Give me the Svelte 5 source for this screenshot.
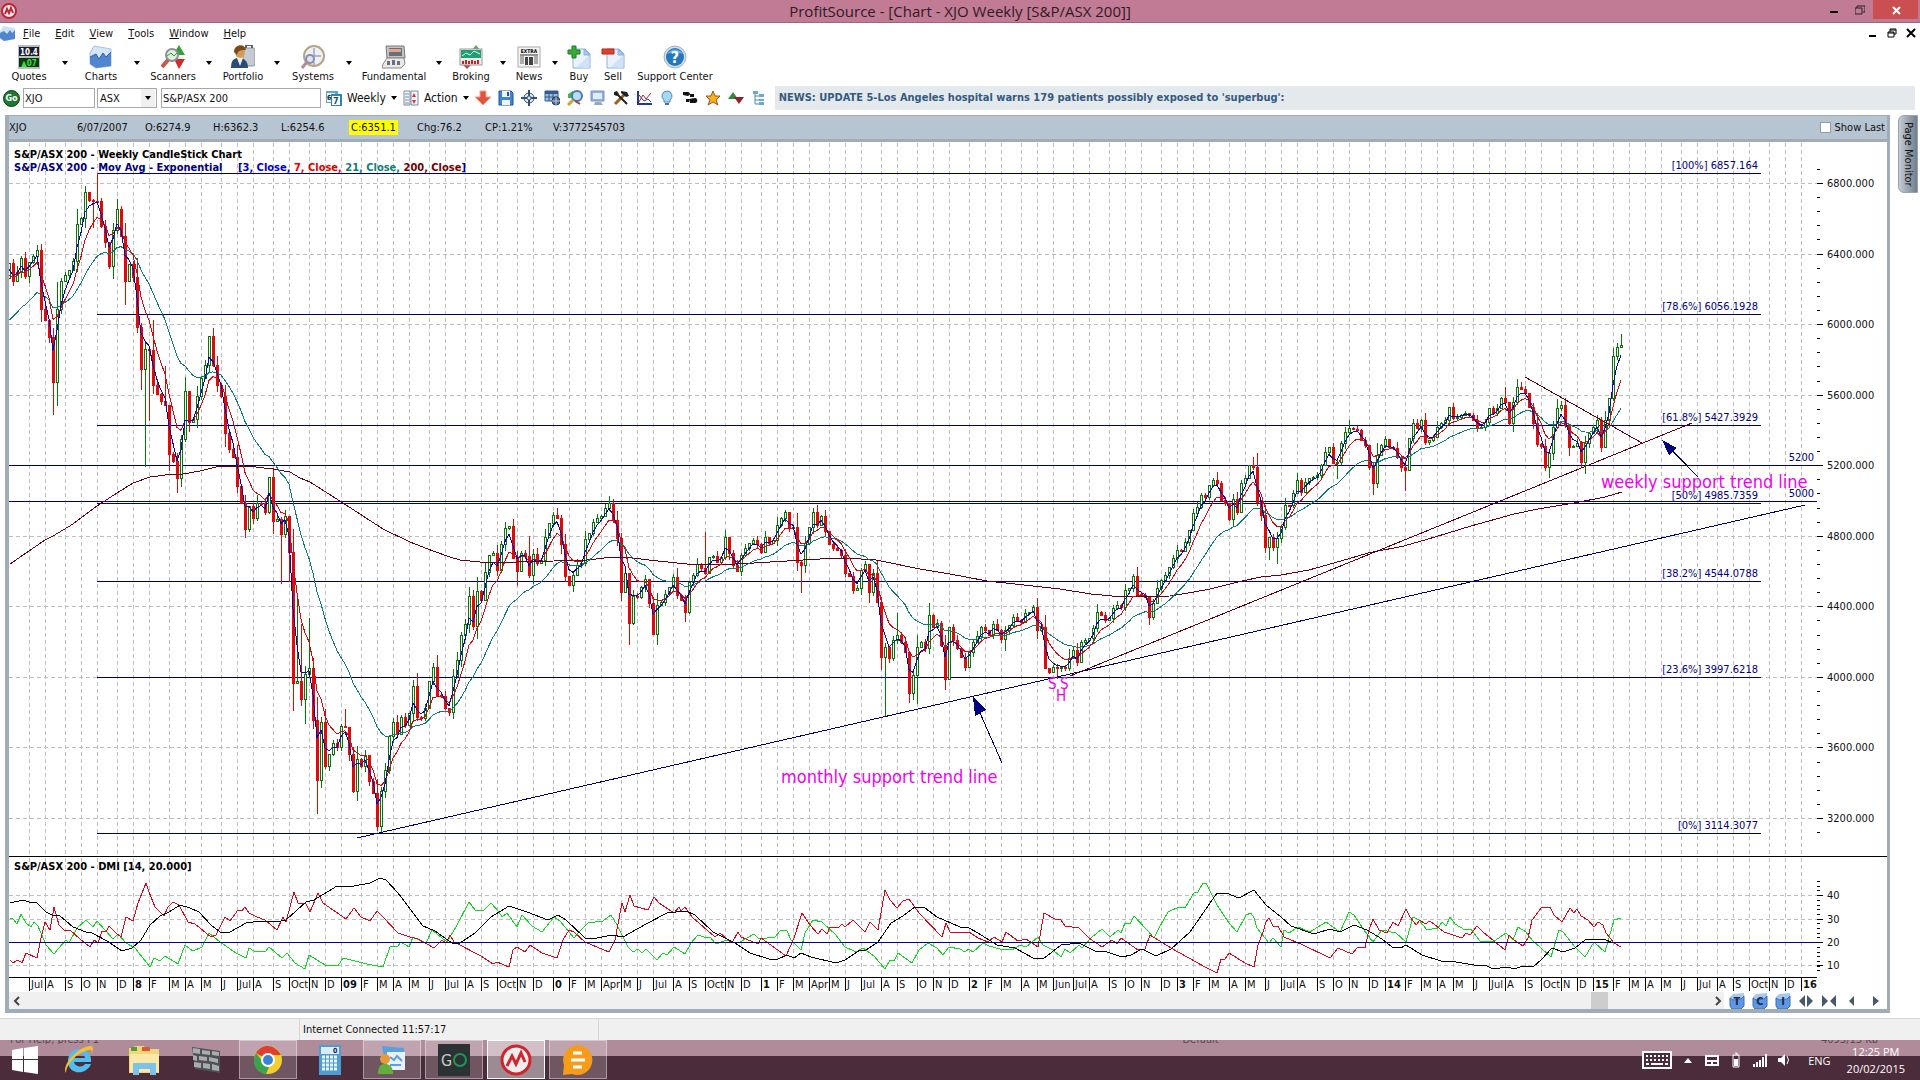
<script lang="ts">
	type Point = [number, number];

	const menus = ['File', 'Edit', 'View', 'Tools', 'Window', 'Help'];

	const tools = [
		{ name: 'Quotes', width: 58, menu: true },
		{ name: 'Charts', width: 58, menu: true },
		{ name: 'Scanners', width: 58, menu: true },
		{ name: 'Portfolio', width: 54, menu: true },
		{ name: 'Systems', width: 58, menu: true },
		{ name: 'Fundamental', width: 76, menu: true },
		{ name: 'Broking', width: 50, menu: true },
		{ name: 'News', width: 38, menu: true },
		{ name: 'Buy', width: 34, menu: false },
		{ name: 'Sell', width: 34, menu: false },
		{ name: 'Support Center', width: 90, menu: false }
	];

	const actions = [
		'download', 'save', 'target', 'table', 'search', 'screen', 'settings',
		'study', 'hint', 'steps', 'favourite', 'updown', 'tree'
	];

	const quote = [
		'XJO', '6/07/2007', 'O:6274.9', 'H:6362.3', 'L:6254.6',
		'C:6351.1', 'Chg:76.2', 'CP:1.21%', 'V:3772545703'
	];

	const tasks = [
		{ name: 'Start', open: false },
		{ name: 'Internet Explorer', open: false },
		{ name: 'File Explorer', open: false },
		{ name: 'Wall', open: false },
		{ name: 'Chrome', open: true },
		{ name: 'Calculator', open: false },
		{ name: 'Contacts', open: true },
		{ name: 'GO', open: true },
		{ name: 'ProfitSource', open: true },
		{ name: 'Notes', open: true }
	];

	let symbol = $state('XJO');
	let exchange = $state('ASX');
	let company = $state('S&P/ASX 200');
	let showLast = $state(false);

	// One candle every 4 units, closes given as plot heights
	const STEP = 4;
	const runs = [
		{
			x: 9,
			closes: `263 281 272 258 276 262 256 250 309 320 337 382 309 281 275 270 261 224 218 192
			200 201 201 226 242 266 230 209 236 281 264 277 327 369 349 350 385 394 401 405
			454 461 478 439 391 422 419 396 378 365 336 365 385 396 433 449 457 486 503 529
			506 518 503 503 512 477 521 519 534 516 552 683 681 699 674 668 720 780 722 766
			754 743 747 726 727 754 791 759 766 755 781 793 826 791 770 736 722 734 717 725
			713 686 717 718 708 681 667 695 696 708 712 676 660 635 624 596 626 591`
		},
		{
			x: 481,
			closes: `600 572 555 553 570 544 528 526 558 571 553 556 575 554 563 560 537 523 515 518
			544 576 585 575 565 563 539 533 522 518 516 508 503 520 538 592 573 623 596 597
			587 579 603 634 605 602 594 587 577 595 600 612 582 575 564 568 573 557 556 562
			557 537 553 565 571 555 548 543 540 544 552 537 543 540 525 518 512 528 527 562
			565 543 527 512 525 516 531 544 548 550 555 573 576 590 588 570 564 592 573 602
			657 647 658 640 635 642 652 693 675 647 642 648 615 627 623 645 679 627 640 648
			657 667 652 642 636 627 630 635 624 630 639 630 625 617 620 622 613 612 607 630`
		},
		{
			x: 1041,
			closes: `627 668 672 667 668 667 668 658 650 662 642 640 638 628 612 615 620 618 608 605
			607 590 588 576 594 595 597 617 603 588 580 575 567 558 550 551 542 530 513 507
			495 497 485 480 483 500 503 519 499 512 483 478 465 467 502 515 547 537 547 538
			527 505 505 493 480 492 482 478 477 475 465 452 447 463 462 443 432 428 429 430
			440 445 467 483 455 445 439 447 448 457 467 470 438 423 428 420 442 440 437 427
			423 420 407 418 417 415 413 415 420 428 427 422 408 413 408 398 402 423 402 387
			389 393 407 423 444 446 467 453 427 408 405 425 447 446 443 462 443 433 427 420
			447 420 398 356 347 345`
		}
	];

	// Spikes that run far past the body
	const highs: Record<number, number> = {
		85: 186, 97: 173, 153: 320, 165: 366, 213: 328, 273: 468, 297: 598, 301: 624, 309: 618,
		345: 709, 469: 587, 529: 536, 557: 508, 609: 496, 705: 532, 785: 510, 817: 505, 897: 613,
		929: 603, 933: 614, 1037: 598, 1069: 649, 1133: 574, 1217: 472, 1253: 457, 1349: 420,
		1453: 403, 1505: 387, 1521: 382, 1561: 401, 1617: 343, 1621: 334
	};
	const lows: Record<number, number> = {
		53: 415, 93: 228, 125: 305, 141: 390, 145: 467, 149: 421, 177: 493, 281: 584, 289: 582,
		301: 706, 305: 724, 317: 814, 321: 788, 377: 831, 381: 833, 517: 586, 573: 592, 629: 645,
		657: 645, 685: 622, 801: 593, 885: 717, 913: 700, 917: 704, 949: 679, 1005: 651, 1057: 679,
		1061: 672, 1269: 560, 1277: 564, 1337: 479, 1373: 495, 1405: 491, 1549: 478, 1585: 474
	};

	const closes: Point[] = runs.flatMap((run) =>
		run.closes
			.trim()
			.split(/\s+/)
			.map((y, i): Point => [run.x + i * STEP, Number(y)])
	);

	const candles = closes.map(([x, close], i) => {
		const open = i ? closes[i - 1][1] : 278;
		const top = Math.min(open, close);
		const bottom = Math.max(open, close);
		const up = close < open;
		const reach = 2 + (bottom - top) * 0.25;
		const high = Math.round(highs[x] ?? top - reach * (((i * 7) % 5) / 3));
		const low = Math.round(lows[x] ?? bottom + reach * (((i * 11) % 7) / 5));
		return { x, top, height: Math.max(bottom - top, 1), up, high, low };
	});

	const average = (period: number, start: number) => {
		const k = 2 / (period + 1);
		let value = start;
		return closes
			.map(([x, y]) => {
				value += (y - value) * k;
				return `${x},${value.toFixed(1)}`;
			})
			.join(' ');
	};

	const fast = average(3, 276);
	const medium = average(7, 280);
	const slow = average(21, 326);
	const long =
		'10,564 45,540 53,536 73,524 97,506 117,493 133,483 150,477 173,474 183,474 200,471 220,466 247,466 273,469 290,472 300,478 310,482 343,503 383,529 410,542 433,551 450,557 460,560 480,562 517,562 554,561 587,560 613,557 632,558 658,561 687,564 717,565 754,563 787,561 820,559 846,558 876,560 920,569 950,574 987,581 1024,585 1060,589 1091,594 1123,597 1170,596 1194,592 1210,589 1242,581 1261,577 1281,575 1309,570 1341,561 1368,553 1404,546 1435,537 1471,526 1514,514 1538,509 1574,503 1605,497 1622,492';

	const adx =
		'10,903 23,900 29,902 37,903 46,912 52,915 59,915 73,927 86,932 92,933 107,941 122,951 132,948 141,940 150,925 160,916 169,912 180,905 190,908 199,912 211,925 220,932 230,932 246,923 260,921 276,922 286,920 306,902 314,900 337,886 349,887 370,883 380,878 386,880 398,893 423,926 435,931 452,943 460,943 475,933 491,917 509,906 527,912 548,920 558,915 566,920 585,938 597,938 612,935 623,937 646,924 667,913 686,911 695,915 713,932 735,943 750,953 769,959 778,959 787,955 794,958 801,953 811,957 836,963 845,960 860,950 866,950 878,942 891,923 903,916 915,907 925,908 937,917 960,927 969,928 978,933 997,945 1015,948 1033,958 1043,959 1061,945 1079,943 1095,951 1107,952 1122,957 1131,955 1142,949 1156,956 1171,949 1190,932 1217,893 1226,893 1239,898 1254,890 1266,905 1281,917 1291,926 1314,934 1330,929 1340,932 1354,925 1367,930 1382,939 1392,947 1401,948 1406,945 1422,955 1444,962 1450,961 1474,965 1487,966 1493,969 1508,967 1514,969 1523,966 1533,967 1542,959 1552,948 1563,952 1575,948 1585,940 1603,939 1614,943 1621,942';
	const minusDi =
		'10,960 13,963 18,960 22,963 26,953 37,958 41,938 45,922 50,930 54,907 59,925 64,930 70,930 80,939 90,947 94,940 98,943 102,931 106,932 109,926 116,933 121,937 126,917 133,921 138,903 146,883 149,892 155,907 164,916 168,907 173,902 179,905 188,922 195,924 211,937 216,935 225,917 230,921 238,910 242,911 245,907 249,913 257,917 265,920 277,930 283,917 286,922 294,892 298,903 306,904 310,912 318,893 323,903 346,919 354,908 361,917 370,921 377,911 383,917 398,933 410,937 418,939 434,948 442,940 446,943 450,935 454,942 481,956 493,964 497,962 509,967 513,950 517,947 525,952 530,945 542,953 557,958 563,940 569,930 574,932 585,942 609,952 615,940 622,903 625,912 630,895 634,906 648,910 654,897 659,903 674,913 679,907 681,911 685,907 692,917 715,937 720,933 732,943 738,932 741,937 758,944 761,938 786,956 794,938 802,913 810,925 818,934 822,929 827,934 830,927 839,927 842,924 845,927 853,920 865,932 870,922 878,930 885,890 890,900 897,908 903,901 909,899 919,913 942,937 946,923 950,932 957,932 969,932 978,938 988,942 994,937 1002,942 1006,932 1018,941 1026,939 1038,947 1044,913 1055,919 1061,920 1065,926 1079,928 1089,938 1102,947 1112,940 1117,944 1121,938 1138,950 1145,949 1150,935 1171,948 1205,967 1217,973 1221,959 1225,959 1229,953 1245,963 1254,967 1258,945 1263,932 1266,922 1269,918 1273,926 1278,926 1284,937 1303,945 1330,958 1338,948 1352,954 1358,947 1365,948 1369,930 1373,919 1379,930 1387,933 1393,922 1398,926 1406,909 1410,917 1416,925 1420,920 1425,924 1430,921 1444,932 1462,938 1466,933 1470,935 1477,926 1483,932 1505,950 1509,935 1514,940 1523,946 1528,938 1532,920 1542,907 1550,907 1554,915 1562,922 1570,908 1574,913 1577,909 1581,916 1588,920 1594,927 1598,922 1603,925 1606,933 1614,943 1621,947';
	const plusDi =
		'10,918 13,919 17,924 21,914 26,923 31,927 34,922 38,926 46,945 54,954 58,949 66,940 69,943 77,928 86,920 93,927 97,921 113,939 118,934 126,943 135,948 150,967 154,958 160,961 165,956 178,964 185,945 193,951 202,947 209,933 220,942 236,953 246,958 249,948 254,951 265,952 269,947 282,958 287,953 295,963 305,969 309,955 325,965 338,966 343,958 367,964 383,967 390,947 398,946 401,942 409,947 413,937 426,943 432,930 447,942 456,927 469,902 475,910 484,910 491,903 499,912 502,917 507,913 517,927 522,915 532,926 542,932 554,917 560,921 574,938 579,932 588,923 603,921 611,915 617,925 628,947 633,952 638,949 642,953 646,949 657,960 663,953 667,955 674,947 685,954 691,943 698,935 704,937 710,937 716,944 727,940 732,943 740,942 754,934 759,939 775,937 781,930 787,931 791,940 801,950 805,933 813,920 822,922 836,935 845,947 856,952 863,948 870,953 874,956 885,969 890,960 894,961 898,953 912,963 919,950 928,943 937,948 943,955 949,947 960,949 965,952 969,949 973,952 983,943 989,946 1000,949 1012,950 1020,945 1026,947 1038,937 1043,945 1053,950 1061,957 1065,949 1070,953 1079,945 1082,948 1092,937 1102,929 1110,937 1118,930 1121,933 1125,923 1130,924 1134,916 1147,930 1154,938 1159,928 1168,912 1179,907 1185,908 1194,893 1198,892 1203,883 1206,883 1217,905 1229,923 1237,932 1246,915 1251,913 1254,918 1257,928 1269,943 1273,938 1281,947 1284,930 1289,933 1298,927 1310,932 1326,922 1340,932 1349,912 1354,915 1364,930 1373,942 1382,930 1396,933 1406,942 1413,917 1419,920 1427,930 1438,928 1442,922 1446,926 1450,917 1455,924 1465,930 1471,929 1480,941 1493,942 1506,933 1513,940 1518,927 1526,932 1532,940 1551,957 1559,930 1563,932 1575,947 1585,957 1594,942 1605,952 1614,920 1621,918';

	// Label and weeks until the next month line
	const months = `Jul:4 A:5 S:4 O:4 N:5 D:4 8:4 F:5 M:4 A:4 M:5 J:4 Jul:4 A:5 S:4 Oct:5 N:4 D:4
		09:5 F:4 M:4 A:4 M:5 J:4 Jul:5 A:4 S:4 Oct:5 N:4 D:5 0:4 F:4 M:4 Apr:5 M:4 J:4 Jul:5 A:4 S:4 Oct:5 N:4 D:5
		1:4 F:4 M:4 Apr:5 M:4 J:4 Jul:5 A:4 S:5 O:4 N:4 D:5 2:4 F:4 M:5 A:4 M:4 Jun:5 Jul:4 A:5 S:4 O:4 N:5 D:4
		3:4 F:4 M:5 A:4 M:5 J:4 Jul:4 A:5 S:4 O:4 N:5 D:4 14:5 F:4 M:4 A:4 M:5 J:4 Jul:4 A:5 S:4 Oct:5 N:4 D:4
		15:5 F:4 M:4 A:4 M:5 J:4 Jul:5 A:4 S:4 Oct:5 N:4 D:4 16:4`;
	let monthX = 29;
	const axis = months.split(/\s+/).map((entry) => {
		const [label, weeks] = entry.split(':');
		const x = monthX;
		monthX += Number(weeks) * STEP;
		return { label, x, year: /^\d/.test(label) };
	});

	const prices = [6800, 6400, 6000, 5600, 5200, 4800, 4400, 4000, 3600, 3200];
	const priceY = (price: number) => Math.round(183 + (6800 - price) * 0.1764);
	const priceTicks = Array.from({ length: 48 }, (_, i) => priceY(6880 - i * 80));

	const levels = [
		{ text: '[100%] 6857.164', y: 173 },
		{ text: '[78.6%] 6056.1928', y: 314 },
		{ text: '[61.8%] 5427.3929', y: 425 },
		{ text: '[50%] 4985.7359', y: 503 },
		{ text: '[38.2%] 4544.0788', y: 581 },
		{ text: '[23.6%] 3997.6218', y: 677 },
		{ text: '[0%] 3114.3077', y: 833 }
	];

	const dmiLevels = [
		{ text: '40', y: 895 },
		{ text: '30', y: 919 },
		{ text: '20', y: 942 },
		{ text: '10', y: 965 }
	];
	const dmiTicks = Array.from({ length: 20 }, (_, i) => Math.round(881 + i * 4.7));
</script>

{#snippet toolIcon(name: string)}
	<svg class="tool-icon" viewBox="0 0 24 24" aria-hidden="true">
		{#if name === 'Quotes'}
			<rect x="1" y="0" width="22" height="24" fill="#b9bdc4" />
			<rect x="2" y="2" width="20" height="9" fill="#1b1f2c" />
			<rect x="2" y="13" width="20" height="9" fill="#0b3a10" />
			<text x="12" y="10" text-anchor="middle" font-size="8" font-weight="bold" fill="#fff">10.4</text>
			<text x="12" y="21" text-anchor="middle" font-size="8" font-weight="bold" fill="#3be03b">▲07</text>
		{:else if name === 'Charts'}
			<path d="M5 1l17 3v17l-15 2-6-4V8z" fill="#d6e6f7" stroke="#a9c3e2" />
			<path d="M1 12l6-3 3 5 4-6 3 4 5-5v14l-15 2-6-4z" fill="#4f86cf" />
			<path d="M1 12l6-3 3 5 4-6 3 4 5-5" fill="none" stroke="#2c62b0" />
		{:else if name === 'Scanners'}
			<path d="M18 0l6 10H12z" fill="#35a035" />
			<path d="M18 24l-5-10h11z" fill="#d02a2a" />
			<circle cx="11" cy="10" r="6" fill="#dff0e0" stroke="#8b9096" stroke-width="2" />
			<path d="M6 11l4-3 3 3 3-3" fill="none" stroke="#35a035" />
			<path d="M7 15l-6 7" stroke="#c85a4a" stroke-width="4" />
		{:else if name === 'Portfolio'}
			<rect x="12" y="3" width="12" height="18" rx="2" fill="#c4cbd3" stroke="#8a939e" />
			<path d="M15 3V0h6v3" fill="none" stroke="#5a6470" stroke-width="2" />
			<path d="M0 23c0-8 3-10 8-10s9 3 9 10z" fill="#2b4d74" />
			<path d="M6 13l3 8 3-8z" fill="#eee" />
			<ellipse cx="9" cy="7" rx="5" ry="6" fill="#d79a52" />
			<path d="M3 7c0-8 11-9 12-2-5 0-8 0-9 5z" fill="#7a4a1a" />
		{:else if name === 'Systems'}
			<circle cx="13" cy="11" r="10" fill="#eef2f7" stroke="#b5a488" stroke-width="2" />
			<path d="M13 3v8h7M5 11h2M13 17v3" stroke="#6f7f95" fill="none" />
			<circle cx="9" cy="14" r="4" fill="#d8e6f5" stroke="#8c8ca8" stroke-width="2" />
			<path d="M6 17l-5 6" stroke="#b58a9a" stroke-width="3" />
		{:else if name === 'Fundamental'}
			<path d="M4 1h18l1 12H5z" fill="#c4c4c4" stroke="#777" />
			<path d="M7 3h13v8H7z" fill="#6b6f78" />
			<path d="M7 4h12v3H7z" fill="#e3a58f" />
			<path d="M5 13h17l1 6-4 4H0l1-4z" fill="#e9e9e9" stroke="#888" />
			<path d="M5 16h3v4H5zM10 15h3v5h-3zM15 16h3v4h-3z" fill="#6a7076" />
		{:else if name === 'Broking'}
			<path d="M17 0l5 6H12z" fill="#6aa06a" />
			<path d="M8 24l-5-5h10z" fill="#b05048" />
			<rect x="1" y="4" width="22" height="16" fill="#eee" stroke="#999" />
			<rect x="2" y="5" width="20" height="8" fill="#1fa070" />
			<path d="M3 11l4-3 4 2 4-4 6 3" fill="none" stroke="#d6ffe8" />
			<path d="M4 19v-3M7 19v-4M10 19v-3M13 19v-4M16 19v-3M19 19v-4" stroke="#c22" stroke-width="2" />
		{:else if name === 'News'}
			<rect x="1" y="2" width="22" height="20" fill="#f4f4f4" stroke="#aaa" />
			<text x="12" y="8" text-anchor="middle" font-size="5" font-weight="bold">EXTRA</text>
			<path d="M3 10h18" stroke="#333" />
			<path d="M3 12h4M3 14h4M3 16h4M3 18h4M17 12h4M17 14h4M17 16h4M17 18h4" stroke="#666" />
			<path d="M8 12h3v8H8zM12 12h4v8h-4z" fill="#444" />
		{:else if name === 'Buy' || name === 'Sell'}
			<path d="M6 4h12l5 5v14H6z" fill="#eaf3fd" stroke="#8fb2dd" />
			<path d="M10 22L22 10v13z" fill="#cfe2f8" />
			<path d="M17 4v6h6z" fill="#a9c8ee" stroke="#8fb2dd" />
			{#if name === 'Buy'}
				<path d="M5 1h4v4h4v4H9v4H5V9H1V5h4z" fill="#37ab35" stroke="#1d7d20" />
			{:else}
				<path d="M1 4h12v5H1z" fill="#e3402c" stroke="#b02a1a" />
			{/if}
		{:else}
			<circle cx="12" cy="12" r="11" fill="#d4dde6" stroke="#aab4be" />
			<circle cx="12" cy="12" r="9" fill="#2378bd" />
			<path d="M4 9c3-6 13-6 16 0-5-2-11-2-16 0z" fill="#6bb2e4" />
			<text x="12" y="18" text-anchor="middle" font-size="16" font-weight="bold" fill="#fff">?</text>
		{/if}
	</svg>
{/snippet}

{#snippet smallIcon(name: string)}
	<svg class="small-icon" viewBox="0 0 16 16" aria-hidden="true">
		{#if name === 'weekly'}
			<path d="M0 1h12v12H0z" fill="#5aa9c8" />
			<path d="M1 3h8v9H1z" fill="#eef6fa" />
			<path d="M5 4h11v12H5z" fill="#2e86ab" />
			<path d="M6 6h8v9H6z" fill="#fff" />
			<text x="1" y="10" font-size="7" font-weight="bold" fill="#222">6</text>
			<text x="7" y="14" font-size="9" font-weight="bold" fill="#14506e">7</text>
		{:else if name === 'action'}
			<path d="M1 1h6v14H1zM8 1h7v14H8z" fill="#f2f5f9" stroke="#7d8ca3" />
			<path d="M2 4h4M2 7h4M2 10h4M2 13h4" stroke="#7d8ca3" />
			<path d="M11 3l2 4H9zM11 14l2-4H9z" fill="#d33" />
		{:else if name === 'download'}
			<path d="M5 1h6v6h5l-8 8-8-8h5z" fill="#e0543c" stroke="#f0a090" />
		{:else if name === 'save'}
			<path d="M1 1h12l2 2v12H1z" fill="#3f86d6" stroke="#1d5296" />
			<path d="M4 1h8v6H4zM4 10h8v5H4z" fill="#eef5fd" />
			<path d="M9 2h2v4H9z" fill="#1d5296" />
		{:else if name === 'target'}
			<circle cx="8" cy="8" r="5" fill="#dfe9f5" stroke="#33506f" />
			<circle cx="8" cy="8" r="2" fill="none" stroke="#33506f" />
			<path d="M8 0v6M8 10v6M0 8h6M10 8h6" stroke="#33506f" stroke-width="2" />
		{:else if name === 'table'}
			<path d="M1 1h13v10H1z" fill="#9dbbe0" stroke="#335a8c" />
			<path d="M1 1h13v3H1z" fill="#335a8c" />
			<path d="M1 7h13M5 4v7M9 4v7" stroke="#335a8c" />
			<circle cx="12" cy="11" r="4" fill="#556f93" stroke="#22364f" />
			<path d="M8 11h8M12 7v8" stroke="#b5cbe6" />
		{:else if name === 'search'}
			<path d="M1 4l5-3 3 4-2 3H1z" fill="#4fae4a" />
			<circle cx="10" cy="6" r="5" fill="#bcdcf6" stroke="#3f7db5" stroke-width="2" />
			<path d="M6 10l-5 5" stroke="#d0a234" stroke-width="3" />
			<path d="M8 11l5 3" stroke="#b2402c" stroke-width="2" />
		{:else if name === 'screen'}
			<path d="M1 1h13v10H1z" fill="#8fb3e0" stroke="#7f93b0" />
			<path d="M3 3h9v6H3z" fill="#e2ecf9" />
			<path d="M5 12h6l2 3H4z" fill="#9aa8bd" />
		{:else if name === 'settings'}
			<path d="M2 14L12 4" stroke="#9a5f22" stroke-width="3" />
			<path d="M4 4l10 10" stroke="#222" stroke-width="2" />
			<path d="M8 1l6 1 2 4-3 1-5-4zM1 2l3-1 2 3-2 2-3-1z" fill="#222" />
		{:else if name === 'study'}
			<path d="M2 1v13h14" fill="none" stroke="#223a8c" stroke-width="2" />
			<path d="M3 12l4-7 3 4 5-6" fill="none" stroke="#c22" />
			<path d="M3 5l5 6 4-2 3 3" fill="none" stroke="#223a8c" />
		{:else if name === 'hint'}
			<path d="M8 1a5 5 0 0 1 3 9v2H5v-2a5 5 0 0 1 3-9z" fill="#a8d8f5" stroke="#3f8dc0" />
			<path d="M6 13h4v2H6z" fill="#667" />
		{:else if name === 'steps'}
			<path d="M1 2h5c2 0 3 3 0 4L1 5zM7 9l6-1c3 0 3 5 0 5H8z" fill="#111" />
			<path d="M8 4h4v3H8zM4 9h3v3H4z" fill="#111" />
		{:else if name === 'favourite'}
			<path d="M8 1l2 5 5 0-4 4 2 5-5-3-5 3 2-5-4-4 5 0z" fill="#f5b31e" stroke="#a3521a" />
		{:else if name === 'updown'}
			<path d="M5 2l5 7H0z" fill="#2f8a3a" />
			<path d="M11 14L6 7h10z" fill="#8c2430" />
		{:else if name === 'tree'}
			<path d="M4 2v12h5M4 6h5M4 10h5" fill="none" stroke="#4a8ab8" />
			<path d="M2 1h5v3H2zM8 4h5v3H8zM8 9h5v2H8zM8 12h5v3H8z" fill="#6aa9d3" />
		{:else}
			<path d="M1 4l3-3 11-1v12l-3 4H3l-2-3z" fill="#a8c8f2" />
			<path d="M1 5l3 2 8-1 3-3v10l-3 3H3l-2-3z" fill="#5f97e2" stroke="#3d6fbd" />
			<text x="8" y="12" text-anchor="middle" font-size="11" font-weight="bold" fill="#1c2d49">{name}</text>
		{/if}
	</svg>
{/snippet}

{#snippet taskIcon(name: string)}
	<svg class="task-icon" viewBox="0 0 32 32" aria-hidden="true">
		{#if name === 'Start'}
			<path d="M3 6l11-2v11H3zM15 4l14-2v13H15zM3 16h11v12L3 26zM15 16h14v14l-14-2z" fill="#fff" />
		{:else if name === 'Internet Explorer'}
			<path d="M16 5c8 0 13 6 12 13H11c1 5 9 6 11 2h6c-5 12-23 11-23-3C5 10 10 5 16 5zm-5 9h11c-1-6-10-6-11 0z" fill="#52bdf0" />
			<path d="M3 29C-2 22 15 2 28 2c4 1 1 7 0 8 1-3 1-5-2-4C16 7 3 20 3 29z" fill="#f2c230" />
		{:else if name === 'File Explorer'}
			<path d="M1 4h4l2-2h9l2 3h13v24H1z" fill="#f1d67c" />
			<path d="M3 3h6v4H3z" fill="#4a9d4a" />
			<path d="M14 3h8v4h-8z" fill="#d65a3a" />
			<path d="M2 10h29v18H2z" fill="#fae9a6" />
			<path d="M5 19h23v12h-6v-6H11v6H5z" fill="#7cc2ea" />
		{:else if name === 'Wall'}
			<path d="M2 3l28 4v22L5 25z" fill="#4e5154" />
			<path d="M3 4l7 1v5l-7-1zM12 6l8 1v4l-8-1zM22 7l7 1v4l-7-1zM3 11l4 1v5l-4-1zM9 12l8 1v4l-8-1zM19 13l9 2v4l-9-2zM4 18l7 1v5l-7-1zM13 19l7 1v5l-7-1zM22 20l7 2v5l-7-1z" fill="#a9acae" />
		{:else if name === 'Chrome'}
			<circle cx="16" cy="16" r="14" fill="#f4cf2c" />
			<path d="M16 16L4 9C10-1 23 0 29 11H16z" fill="#dd3f31" />
			<path d="M4 9l8 10 5 4-3 7C3 28-1 18 4 9z" fill="#3da24e" />
			<circle cx="16" cy="16" r="7" fill="#fff" />
			<circle cx="16" cy="16" r="5" fill="#3b82d0" />
		{:else if name === 'Calculator'}
			<path d="M5 1h22v30H5z" fill="#4f9bd3" />
			<path d="M7 3h18v7H7z" fill="#d9ecf8" />
			<path d="M8 13h16M8 17h16M8 21h16M8 25h16" stroke="#e8f4fc" stroke-width="3" stroke-dasharray="3 1" />
			<text x="19" y="9" font-size="7" font-weight="bold" fill="#225">0</text>
		{:else if name === 'Contacts'}
			<path d="M6 2l22 2v20l-18-1z" fill="#5b9fdd" />
			<path d="M11 8h18v18H11z" fill="#e8f1fb" />
			<path d="M14 13l4 3 3-4 5 5M14 21h11" stroke="#5b9fdd" fill="none" stroke-width="2" />
			<circle cx="9" cy="15" r="5" fill="#e69a3c" />
			<path d="M2 30c0-8 3-10 7-10s8 2 8 10z" fill="#65ae3c" />
		{:else if name === 'GO'}
			<path d="M0 0h32v32H0z" fill="#2c3133" />
			<text x="3" y="22" font-size="16" fill="#c8cccc">G</text>
			<circle cx="22" cy="16" r="6" fill="none" stroke="#1f9556" stroke-width="2" />
		{:else if name === 'ProfitSource'}
			<circle cx="16" cy="16" r="14" fill="#eee" stroke="#d0242f" stroke-width="3" />
			<path d="M7 22l5-10 4 8 5-11 4 9" fill="none" stroke="#d0242f" stroke-width="3" />
		{:else}
			<path d="M16 1a15 15 0 1 1-6 29l-9 1 1-10A15 15 0 0 1 16 1z" fill="#f69c1a" />
			<path d="M11 9h9M9 16h14M11 23h9" stroke="#fff" stroke-width="3" />
		{/if}
	</svg>
{/snippet}

{#snippet caret()}
	<svg class="caret" viewBox="0 0 6 4" aria-hidden="true"><path d="M0 0h6L3 4z" /></svg>
{/snippet}

<div class="window">
	<header class="title-bar">
		<svg class="logo" viewBox="0 0 16 16" aria-hidden="true">
			<circle cx="8" cy="8" r="7" fill="#f6eef0" stroke="#c32232" stroke-width="2" />
			<path d="M4 11l2-5 2 4 2-5 2 5" fill="none" stroke="#c32232" stroke-width="2" />
		</svg>
		<h1>ProfitSource - [Chart - XJO Weekly [S&amp;P/ASX 200]]</h1>
		<div class="window-buttons">
			<button aria-label="Minimise"><svg viewBox="0 0 10 10"><path d="M1 6h8v2H1z" /></svg></button>
			<button aria-label="Restore">
				<svg viewBox="0 0 10 10"><path d="M0 3h7v6H0zM2 3V1h8v6H8" fill="none" stroke="#222" /></svg>
			</button>
			<button class="close" aria-label="Close">
				<svg viewBox="0 0 10 10"><path d="M2 2l7 7M9 2L2 9" stroke="#fff" stroke-width="2" /></svg>
			</button>
		</div>
	</header>

	<nav class="menu-bar">
		<svg class="menu-icon" viewBox="0 0 16 16" aria-hidden="true">
			<path d="M3 1l12 2v11l-11 2-4-3V6z" fill="#cfe1f5" />
			<path d="M0 8l4-2 3 3 3-4 2 3 3-3v9l-11 2-4-3z" fill="#4f86cf" />
		</svg>
		{#each menus as menu}
			<button><u>{menu[0]}</u>{menu.slice(1)}</button>
		{/each}
		<div class="child-buttons">
			<button aria-label="Minimise chart"><svg viewBox="0 0 10 10"><path d="M1 7h7v2H1z" /></svg></button>
			<button aria-label="Restore chart">
				<svg viewBox="0 0 10 10"><path d="M1 4h6v5H1zM3 4V1h6v5H7M3 2h6M1 5h6" fill="none" stroke="#000" /></svg>
			</button>
			<button aria-label="Close chart">
				<svg viewBox="0 0 10 10"><path d="M1 1l8 8M9 1L1 9" stroke="#000" stroke-width="2" /></svg>
			</button>
		</div>
	</nav>

	<div class="toolbar">
		{#each tools as tool}
			<button class="tool" style:width="{tool.width}px">
				{@render toolIcon(tool.name)}
				<span>{tool.name}</span>
			</button>
			{#if tool.menu}
				<button class="drop" aria-label="{tool.name} menu">{@render caret()}</button>
			{/if}
		{/each}
	</div>

	<div class="chart-bar">
		<button class="go" aria-label="Go">Go</button>
		<input class="symbol" aria-label="Symbol" bind:value={symbol} />
		<div class="exchange">
			<select aria-label="Exchange" bind:value={exchange}>
				<option>ASX</option>
			</select>
			<span class="arrow">{@render caret()}</span>
		</div>
		<input class="company" aria-label="Company" bind:value={company} />
		<button class="mode">{@render smallIcon('weekly')}Weekly{@render caret()}</button>
		<button class="mode">{@render smallIcon('action')}Action{@render caret()}</button>
		<div class="actions">
			{#each actions as action}
				<button aria-label={action}>{@render smallIcon(action)}</button>
			{/each}
		</div>
		<p class="news">NEWS: UPDATE 5-Los Angeles hospital warns 179 patients possibly exposed to 'superbug':</p>
	</div>

	<div class="workspace">
		<main class="chart-frame">
			<div class="quote-bar">
				<ul>
					{#each quote as item}
						<li><span class:close-price={item.startsWith('C:')}>{item}</span></li>
					{/each}
				</ul>
				<label><input type="checkbox" bind:checked={showLast} />Show Last</label>
			</div>

			<svg class="chart" viewBox="9 142 1878 850" role="img" aria-label="S&P/ASX 200 weekly chart">
				<g class="grid">
					{#each axis as month}
						<path d="M{month.x + 0.5} 143V855M{month.x + 0.5} 858V976" />
					{/each}
					{#each prices as price}
						<path d="M9 {priceY(price) + 0.5}H1817" />
					{/each}
					{#each dmiLevels as level}
						<path d="M9 {level.y + 0.5}H1817" />
					{/each}
				</g>

				<g class="navy-lines">
					{#each levels as level}
						<path d="M97 {level.y + 0.5}H1761" />
					{/each}
					<path d="M9 465.5H1817M9 501.5H1817" />
				</g>

				<g class="candles">
					{#each candles as candle}
						<g class={candle.up ? 'up' : 'down'}>
							<path d="M{candle.x + 0.5} {candle.high}V{candle.low}" />
							<rect x={candle.x - 0.5} y={candle.top + 0.5} width="2" height={candle.height} />
						</g>
					{/each}
				</g>

				<g class="averages">
					<polyline points={long} stroke="#650010" />
					<polyline points={slow} stroke="#127a74" />
					<polyline points={medium} stroke="#d00a14" />
					<polyline points={fast} stroke="#0808a0" />
				</g>

				<g class="trends">
					<path d="M357 838L1805 505M973 697l29 66M1662 440l36 37" stroke="#00006c" />
					<path d="M1070 676L1692 423M1525 377L1642 443" stroke="#5e000c" />
					<path d="M973 697l2 19 11-6zM1662 440l7 15 8-7z" fill="#000080" />
				</g>

				<g class="level-labels">
					{#each levels as level}
						<text x="1758" y={level.y - 4}>{level.text}</text>
					{/each}
					<text x="1814" y="461">5200</text>
					<text x="1814" y="497">5000</text>
				</g>

				<g class="notes">
					<text x="781" y="783">monthly support trend line</text>
					<text x="1601" y="488">weekly support trend line</text>
					<text class="mark" x="1048" y="689">S</text>
					<text class="mark" x="1060" y="689">S</text>
					<text class="mark" x="1056" y="701">H</text>
				</g>

				<g class="legend">
					<text x="14" y="158">S&amp;P/ASX 200 - Weekly CandleStick Chart</text>
					<text x="14" y="171" fill="#000080">S&amp;P/ASX 200 - Mov Avg - Exponential</text>
					<text x="238" y="171" fill="#000080">[<tspan fill="#0000d8">3, Close,</tspan> <tspan fill="#e00000">7, Close,</tspan> <tspan fill="#108078">21, Close,</tspan> <tspan fill="#700000">200, Close</tspan>]</text>
					<text x="14" y="870">S&amp;P/ASX 200 - DMI [14, 20.000]</text>
				</g>

				<g class="dmi">
					<polyline points={plusDi} stroke="#10d820" />
					<polyline points={minusDi} stroke="#d80818" />
					<polyline points={adx} stroke="#000" />
					<path d="M9 942.5H1817" stroke="#000090" />
				</g>

				<g class="axis">
					<path d="M9 856.5H1887M9 977.5H1817" />
					{#each priceTicks as y}
						<path d="M1817 {y + 0.5}h3" />
					{/each}
					{#each prices as price}
						<path d="M1817 {priceY(price) + 0.5}h6" />
						<text x="1827" y={priceY(price) + 4}>{price}.000</text>
					{/each}
					{#each dmiTicks as y}
						<path d="M1817 {y + 0.5}h3" />
					{/each}
					{#each dmiLevels as level}
						<path d="M1817 {level.y + 0.5}h6" />
						<text x="1827" y={level.y + 4}>{level.text}</text>
					{/each}
					{#each axis as month}
						<path d="M{month.x + 0.5} 978V991" />
						<text class:year={month.year} x={month.x + 2} y="988">{month.label}</text>
					{/each}
				</g>
			</svg>

			<div class="scroll-row">
				<div class="scrollbar">
					<button aria-label="Scroll left"><svg viewBox="0 0 8 10"><path d="M6 1L2 5l4 4" /></svg></button>
					<span class="thumb"></span>
					<button aria-label="Scroll right"><svg viewBox="0 0 8 10"><path d="M2 1l4 4-4 4" /></svg></button>
				</div>
				<div class="scroll-tools">
					<button aria-label="Templates">{@render smallIcon('T')}</button>
					<button aria-label="Colours">{@render smallIcon('C')}</button>
					<button aria-label="Import">{@render smallIcon('I')}</button>
					<button aria-label="Expand"><svg viewBox="0 0 16 14"><path d="M7 1v12L1 7zM9 1v12l6-6z" /></svg></button>
					<button aria-label="Compress"><svg viewBox="0 0 16 14"><path d="M1 1v12l6-6zM15 1v12L9 7z" /></svg></button>
					<button aria-label="Back"><svg viewBox="0 0 16 14"><path d="M10 2v10L5 7z" /></svg></button>
					<button aria-label="Forward"><svg viewBox="0 0 16 14"><path d="M6 2v10l6-5z" /></svg></button>
				</div>
			</div>
		</main>
		<button class="page-monitor">Page Monitor</button>
	</div>

	<div class="status-bar">
		<span class="status-empty"></span>
		<span class="status-text">Internet Connected 11:57:17</span>
	</div>

	<footer class="taskbar">
		<div class="behind">
			<span>For Help, press F1</span>
			<span class="cell">Default</span>
			<span class="size">4093/13 Kb</span>
		</div>
		{#each tasks as task}
			<button
				class="task"
				class:pinned={task.name === 'Start' || task.name === 'Internet Explorer'}
				class:open={task.open}
				class:active={task.name === 'ProfitSource'}
				aria-label={task.name}
			>
				{@render taskIcon(task.name)}
			</button>
		{/each}
		<div class="tray">
			<svg class="keyboard" viewBox="0 0 30 18" aria-hidden="true">
				<rect x="1" y="1" width="28" height="16" fill="#4b2c3a" stroke="#fff" stroke-width="2" />
				<path d="M4 5h22M4 9h22" stroke="#fff" stroke-width="2" stroke-dasharray="2 2" />
				<path d="M4 13h3M9 13h12M23 13h3" stroke="#fff" stroke-width="2" />
			</svg>
			<svg viewBox="0 0 16 16" aria-hidden="true"><path d="M8 6l4 5H4z" fill="#fff" /></svg>
			<svg viewBox="0 0 16 16" aria-hidden="true">
				<path d="M1 3h14v11H1z" fill="#fff" />
				<path d="M3 5h10v3H3zM3 10h4v2H3zM9 10h4v2H9z" fill="#4b2c3a" />
			</svg>
			<svg viewBox="0 0 16 16" aria-hidden="true">
				<path d="M5 3h6v12H5zM7 1h2v2" fill="none" stroke="#fff" />
				<path d="M6 7h4v7H6z" fill="#fff" />
			</svg>
			<svg viewBox="0 0 16 16" aria-hidden="true">
				<path d="M2 15v-3M5 15v-5M8 15V8M11 15V5M14 15V2" stroke="#fff" stroke-width="2" />
			</svg>
			<svg viewBox="0 0 16 16" aria-hidden="true">
				<path d="M2 6h3l4-4v12l-4-4H2z" fill="#fff" />
				<path d="M11 4q3 4 0 8" fill="none" stroke="#fff" />
			</svg>
			<span class="language">ENG</span>
			<time>12:25 PM<br />20/02/2015</time>
		</div>
	</footer>
</div>

<style>
	:global(body) {
		margin: 0;
		background: #fff;
	}

	.window {
		display: flex;
		flex-direction: column;
		min-height: 100vh;
		font-family: Tahoma, 'DejaVu Sans Condensed', 'DejaVu Sans', sans-serif;
		font-size: 11px;
		color: #111;
	}

	button {
		display: flex;
		align-items: center;
		justify-content: center;
		padding: 0;
		border: 0;
		background: none;
		font: inherit;
		color: inherit;
	}

	input,
	select {
		box-sizing: border-box;
		font: inherit;
		color: inherit;
	}

	.title-bar {
		display: grid;
		grid-template-columns: 1fr auto 1fr;
		align-items: center;
		box-sizing: border-box;
		height: 23px;
		background: #c27b95;
		border-bottom: 1px solid #a0637b;
	}

	.logo {
		width: 16px;
		height: 16px;
		padding-left: 1px;
	}

	h1 {
		margin: 0;
		font-family: 'Segoe UI', 'Open Sans', sans-serif;
		font-size: 15px;
		font-weight: 400;
		line-height: 22px;
		color: #2e1a22;
	}

	.window-buttons {
		display: flex;
		align-self: start;
		justify-content: flex-end;
		height: 19px;
		padding-right: 2px;
	}

	.window-buttons button {
		width: 26px;
	}

	.window-buttons svg,
	.child-buttons svg {
		width: 10px;
		height: 10px;
	}

	.window-buttons .close {
		width: 45px;
		background: #c94f50;
	}

	.menu-bar {
		display: flex;
		align-items: center;
		height: 20px;
		gap: 15px;
	}

	.menu-icon {
		width: 16px;
		height: 16px;
		margin-right: -8px;
	}

	.child-buttons {
		display: flex;
		gap: 9px;
		margin-left: auto;
		padding-right: 4px;
	}

	.toolbar {
		display: flex;
		height: 43px;
	}

	.tool {
		flex-direction: column;
		justify-content: flex-start;
		flex-shrink: 0;
		gap: 1px;
		padding-top: 2px;
		line-height: 14px;
		white-space: nowrap;
	}

	.tool-icon {
		width: 24px;
		height: 24px;
	}

	.drop {
		width: 14px;
		height: 40px;
	}

	.caret {
		width: 6px;
		height: 4px;
	}

	.chart-bar {
		display: flex;
		align-items: center;
		height: 24px;
		padding: 0 5px 5px 3px;
		font-size: 12px;
	}

	.go {
		width: 17px;
		height: 17px;
		margin-right: 3px;
		border: 1px solid #0c3d17;
		border-radius: 50%;
		background: #1c7a33;
		font-size: 9px;
		font-weight: bold;
		color: #fff;
	}

	.symbol,
	.company,
	.exchange {
		height: 20px;
		padding: 0 1px;
		border: 1px solid #a5a9ae;
		background: #fff;
		font-size: 11px;
	}

	.symbol {
		width: 72px;
	}

	.exchange {
		display: flex;
		box-sizing: border-box;
		width: 60px;
		margin: 0 4px 0 2px;
	}

	.exchange select {
		flex: 1;
		appearance: none;
		border: 0;
		background: none;
		padding: 0 1px;
	}

	.exchange .arrow {
		display: flex;
		align-items: center;
		justify-content: center;
		width: 14px;
		background: #f0f0f0;
		pointer-events: none;
	}

	.company {
		width: 160px;
		margin-right: 5px;
	}

	.small-icon {
		width: 16px;
		height: 16px;
	}

	.mode {
		gap: 5px;
		margin-right: 6px;
	}

	.actions {
		display: flex;
		gap: 7px;
		padding-right: 8px;
	}

	.news {
		flex: 1;
		margin: 0;
		padding-left: 4px;
		background: #e3e9ed;
		font-size: 11px;
		line-height: 24px;
		font-weight: bold;
		color: #345a7e;
	}

	.workspace {
		display: flex;
		align-items: flex-start;
		gap: 8px;
		padding: 0 2px 5px 5px;
	}

	.chart-frame {
		flex: 1;
		min-width: 0;
		border: solid #a0adb6;
		border-width: 0 3px 4px 4px;
	}

	.quote-bar {
		display: flex;
		align-items: center;
		justify-content: space-between;
		box-sizing: border-box;
		height: 27px;
		background: #b7c5d2;
		border-top: 1px solid #a0adb6;
		border-bottom: 3px solid #a0adb6;
	}

	.quote-bar ul {
		display: flex;
		margin: 0;
		padding: 0;
		list-style: none;
	}

	.quote-bar li {
		width: 68px;
		white-space: nowrap;
	}

	.close-price {
		padding: 1px 2px;
		background: #ff0;
	}

	.quote-bar label {
		display: flex;
		align-items: center;
		gap: 4px;
		padding-right: 2px;
	}

	.quote-bar label input {
		appearance: none;
		width: 11px;
		height: 11px;
		margin: 0;
		border: 1px solid #8f9ba6;
		background: #fff;
	}

	.chart {
		display: block;
		width: 100%;
		font-size: 11px;
	}

	.chart g {
		fill: none;
		stroke-width: 1;
	}

	.chart path,
	.chart rect,
	.chart polyline {
		shape-rendering: crispEdges;
	}

	.grid path {
		stroke: #bebebe;
		stroke-dasharray: 4 3;
	}

	.navy-lines path {
		stroke: #000070;
	}

	.up path,
	.up rect {
		stroke: #0a760a;
	}

	.up rect {
		fill: #fff;
	}

	.down path,
	.down rect {
		stroke: #e00a0a;
	}

	.down rect {
		fill: #e00a0a;
	}

	.level-labels text {
		fill: #000080;
		text-anchor: end;
	}

	.notes text {
		fill: #f000f0;
		font-size: 18px;
	}

	.notes .mark {
		font-size: 15px;
	}

	.legend text {
		font-weight: bold;
	}

	.legend text:not([fill]) {
		fill: #000;
	}

	.axis path {
		stroke: #000;
	}

	.axis text {
		fill: #111;
	}

	.axis .year {
		font-weight: bold;
	}

	.scroll-row {
		display: flex;
		height: 17px;
	}

	.scrollbar {
		display: flex;
		flex: 1;
		padding: 0 2px 0 4px;
		background: #f0f0f0;
	}

	.scrollbar svg {
		width: 8px;
		height: 10px;
		fill: none;
		stroke: #444;
		stroke-width: 2;
	}

	.thumb {
		width: 17px;
		margin: 0 106px 0 auto;
		background: #cdcdcd;
	}

	.scroll-tools {
		display: flex;
		gap: 7px;
		padding: 0 4px 0 5px;
	}

	.scroll-tools svg {
		width: 16px;
		height: 16px;
		fill: #47586a;
	}

	.page-monitor {
		width: 20px;
		height: 78px;
		border: 1px solid #9aa4ae;
		border-radius: 6px 0 0 6px;
		background: linear-gradient(90deg, #c5ccd4, #6f7e8e);
		writing-mode: vertical-rl;
		font-size: 11px;
	}

	.status-bar {
		display: flex;
		box-sizing: border-box;
		height: 22px;
		background: #f0f0f0;
		border-top: 1px solid #d7d7d7;
		line-height: 21px;
	}

	.status-empty {
		width: 299px;
		border-right: 1px solid #d7d7d7;
	}

	.status-text {
		width: 295px;
		padding-left: 3px;
		border-right: 1px solid #d7d7d7;
	}

	.taskbar {
		position: relative;
		display: flex;
		height: 40px;
		padding-left: 7px;
		background: linear-gradient(#b08c9a 16px, #4b2c3a 16px);
	}

	/* Status line of the window underneath, seen through the taskbar */
	.behind {
		position: absolute;
		inset: 0 0 auto;
		display: flex;
		height: 4px;
		padding: 0 42px 0 10px;
		overflow: hidden;
		line-height: 0;
		color: #5c4651;
	}

	.behind .cell {
		margin: 0 auto 0 58%;
	}

	.task {
		position: relative;
		box-sizing: border-box;
		width: 58px;
		height: 39px;
		margin-right: 4px;
	}

	.pinned {
		width: 36px;
		margin-right: 18px;
	}

	.open {
		border: 1px solid rgba(255, 255, 255, 0.4);
		background: rgba(255, 255, 255, 0.2);
	}

	.active {
		border-color: #fff;
		background: rgba(255, 255, 255, 0.45);
	}

	.task-icon {
		width: 32px;
		height: 32px;
	}

	.tray {
		display: flex;
		align-items: center;
		gap: 8px;
		margin-left: auto;
		padding-right: 15px;
		font-family: 'Segoe UI', 'Open Sans', sans-serif;
		font-size: 11px;
		color: #fff;
	}

	.tray svg {
		width: 16px;
		height: 16px;
	}

	.tray .keyboard {
		width: 30px;
		height: 18px;
	}

	.language {
		margin: 0 8px;
	}

	time {
		line-height: 17px;
		text-align: center;
	}
</style>
